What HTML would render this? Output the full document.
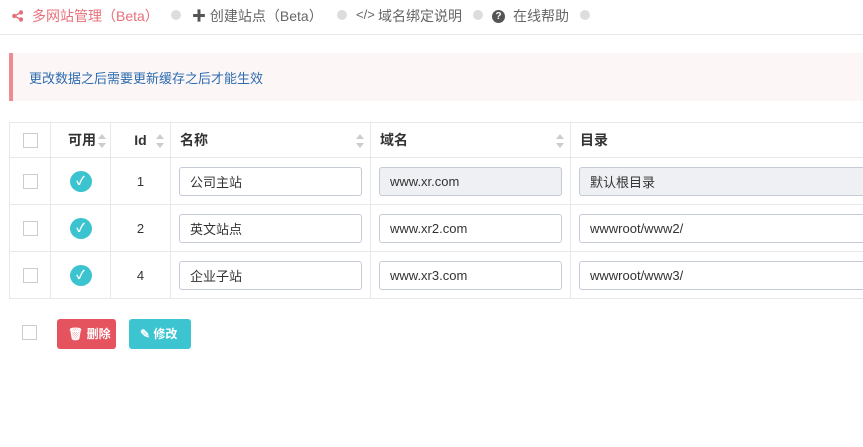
<!DOCTYPE html><html><head><meta charset="utf-8"><style>
*{box-sizing:border-box;margin:0;padding:0}
body{width:863px;height:447px;overflow:hidden;background:#fff;font-family:"Liberation Sans","Noto Sans CJK SC",sans-serif;font-size:13px;color:#333;position:relative}
.nav{position:absolute;top:0;left:0;width:863px;height:35px;border-bottom:1px solid #e8e8e8;font-size:14px;color:#666}
.nav span{position:absolute;top:6px;white-space:nowrap}
.dot{position:absolute;top:10px;width:10px;height:10px;border-radius:50%;background:#ddd}
.alert{position:absolute;left:9px;top:53px;width:854px;height:48px;background:#fdf6f6;border-left:4px solid #ef8a92;color:#2c6cb0;font-size:13px;padding:15px 0 0 16px}
table{position:absolute;left:9px;top:122px;border-collapse:collapse;table-layout:fixed;width:870px}
td,th{border:1px solid #e6e9ec;height:47px;vertical-align:middle}
th{height:35px;font-weight:bold;font-size:14px;text-align:left;padding-left:9px;position:relative}
.cb{display:inline-block;width:15px;height:15px;border:1px solid #ccc;background:#fff;vertical-align:middle}
.c{text-align:center;padding:0}
.sort{position:absolute;right:6px;top:11px;width:8px;height:14px}
.sort:before{content:"";position:absolute;top:0;left:0;border:4px solid transparent;border-bottom:5px solid #ccc;border-top:0}
.sort:after{content:"";position:absolute;bottom:0;left:0;border:4px solid transparent;border-top:5px solid #ccc;border-bottom:0}
.ok{display:inline-block;width:22px;height:21px;border-radius:50%;background:#3bc3d0;color:#fff;font-size:12px;line-height:21px;text-align:center;font-weight:bold;vertical-align:middle}
input{width:183px;height:29px;border:1px solid #c4cad6;border-radius:3px;padding-left:10px;font-size:13px;font-family:inherit;color:#333;background:#fff;margin-left:-1px;vertical-align:middle}
input.ro{background:#eef0f3}
td.i{padding-left:9px}
.btn{position:absolute;top:319px;height:30px;border-radius:3px;color:#fff;font-size:12px;font-weight:bold;line-height:30px;padding-left:11px}
</style></head><body>
<div class="nav">
<svg style="position:absolute;left:12px;top:10px" width="11" height="12" viewBox="0 0 11 12"><circle cx="9" cy="2.5" r="2.2" fill="#e8707b"/><circle cx="2.3" cy="6" r="2.2" fill="#e8707b"/><circle cx="9" cy="9.5" r="2.2" fill="#e8707b"/><path d="M9 2.5L2.3 6L9 9.5" stroke="#e8707b" stroke-width="1.5" fill="none"/></svg>
<span style="left:32px;color:#e8707b">多网站管理（Beta）</span>
<div class="dot" style="left:171px"></div>
<span style="left:192px"><b style="color:#555">✚</b> 创建站点（Beta）</span>
<div class="dot" style="left:337px"></div>
<span style="left:356px;font-size:13px;top:7px">&lt;/&gt;</span><span style="left:378px">域名绑定说明</span>
<div class="dot" style="left:473px"></div>
<span style="left:492px"><b style="display:inline-block;width:13px;height:13px;border-radius:50%;background:#555;color:#fff;font-size:10px;text-align:center;line-height:13px">?</b></span><span style="left:513px">在线帮助</span>
<div class="dot" style="left:580px"></div>
</div>
<div class="alert">更改数据之后需要更新缓存之后才能生效</div>
<table>
<colgroup><col style="width:41px"><col style="width:60px"><col style="width:60px"><col style="width:200px"><col style="width:200px"><col style="width:309px"></colgroup>
<tr><th class="c"><span class="cb"></span></th><th style="text-align:right;padding-right:14px">可用<i class="sort" style="right:4px"></i></th><th class="c">Id<i class="sort"></i></th><th>名称<i class="sort"></i></th><th>域名<i class="sort"></i></th><th>目录</th></tr>
<tr><td class="c"><span class="cb"></span></td><td class="c"><span class="ok">✓</span></td><td class="c">1</td><td class="i"><input value="公司主站"></td><td class="i"><input class="ro" value="www.xr.com"></td><td class="i"><input class="ro" style="width:300px" value="默认根目录"></td></tr>
<tr><td class="c"><span class="cb"></span></td><td class="c"><span class="ok">✓</span></td><td class="c">2</td><td class="i"><input value="英文站点"></td><td class="i"><input value="www.xr2.com"></td><td class="i"><input style="width:300px" value="wwwroot/www2/"></td></tr>
<tr><td class="c"><span class="cb"></span></td><td class="c"><span class="ok">✓</span></td><td class="c">4</td><td class="i"><input value="企业子站"></td><td class="i"><input value="www.xr3.com"></td><td class="i"><input style="width:300px" value="wwwroot/www3/"></td></tr>
</table>
<span class="cb" style="position:absolute;left:22px;top:325px"></span>
<div class="btn" style="left:57px;width:59px;background:#e5535f">🗑 删除</div>
<div class="btn" style="left:129px;width:62px;background:#3cc5d1">✎ 修改</div>
</body></html>
